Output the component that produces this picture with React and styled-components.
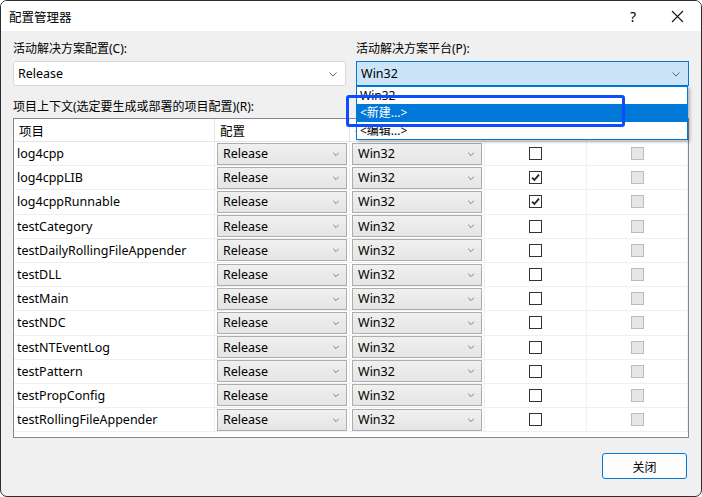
import React from "react";
import styled, { createGlobalStyle } from "styled-components";

const GlobalStyle = createGlobalStyle`
	html, body {
		margin: 0;
		padding: 0;
		background: #ffffff;
	}
	* {
		box-sizing: border-box;
	}
`;

const projects = [
	{ name: "log4cpp", build: false },
	{ name: "log4cppLIB", build: true },
	{ name: "log4cppRunnable", build: true },
	{ name: "testCategory", build: false },
	{ name: "testDailyRollingFileAppender", build: false },
	{ name: "testDLL", build: false },
	{ name: "testMain", build: false },
	{ name: "testNDC", build: false },
	{ name: "testNTEventLog", build: false },
	{ name: "testPattern", build: false },
	{ name: "testPropConfig", build: false },
	{ name: "testRollingFileAppender", build: false },
];

const platformOptions = ["Win32", "<新建...>", "<编辑...>"];

function Chevron({ size = 10, color = "#606060" }) {
	return (
		<svg width={size} height={size} viewBox="0 0 10 10">
			<path d="M1.5 3.5 L5 7 L8.5 3.5" fill="none" stroke={color} strokeWidth="1" />
		</svg>
	);
}

function CheckMark() {
	return (
		<svg width="11" height="11" viewBox="0 0 11 11">
			<path d="M2 5.6 L4.4 8 L9 2.6" fill="none" stroke="#222" strokeWidth="1.8" />
		</svg>
	);
}

function App() {
	return (
		<>
			<GlobalStyle />
			<Window>
				<TitleBar>
					<Title>配置管理器</Title>
					<TitleButtons>
						<HelpButton>?</HelpButton>
						<CloseIcon>
							<svg width="13" height="13" viewBox="0 0 13 13">
								<path d="M1 1 L12 12 M12 1 L1 12" stroke="#1a1a1a" strokeWidth="1.1" />
							</svg>
						</CloseIcon>
					</TitleButtons>
				</TitleBar>
				<Body>
					<TopRow>
						<Field>
							<Label>活动解决方案配置(C):</Label>
							<Combo>
								<span>Release</span>
								<Chevron />
							</Combo>
						</Field>
						<Field>
							<Label>活动解决方案平台(P):</Label>
							<ComboWrap>
								<Combo $active>
									<span>Win32</span>
									<Chevron />
								</Combo>
								<DropList>
									{platformOptions.map((opt, i) => (
										<DropItem key={opt} $selected={i === 1}>
											{opt}
										</DropItem>
									))}
								</DropList>
								<Highlight />
							</ComboWrap>
						</Field>
					</TopRow>
					<TableLabel>项目上下文(选定要生成或部署的项目配置)(R):</TableLabel>
					<Table>
						<HeaderRow>
							<HeadCell>项目</HeadCell>
							<HeadCell>配置</HeadCell>
							<HeadCell>平台</HeadCell>
							<HeadCell $center>生成</HeadCell>
							<HeadCell $center>部署</HeadCell>
						</HeaderRow>
						{projects.map((p) => (
							<Row key={p.name}>
								<NameCell>{p.name}</NameCell>
								<Cell>
									<CellCombo>
										<span>Release</span>
										<Chevron size={8} />
									</CellCombo>
								</Cell>
								<Cell>
									<CellCombo>
										<span>Win32</span>
										<Chevron size={8} />
									</CellCombo>
								</Cell>
								<Cell $center>
									<CheckBox>{p.build && <CheckMark />}</CheckBox>
								</Cell>
								<Cell $center>
									<CheckBox $disabled />
								</Cell>
							</Row>
						))}
					</Table>
					<Footer>
						<CloseButton>关闭</CloseButton>
					</Footer>
				</Body>
			</Window>
		</>
	);
}

const Window = styled.div`
	width: 702px;
	height: 497px;
	border: 1px solid #2e2e2e;
	border-radius: 7px;
	overflow: hidden;
	display: flex;
	flex-direction: column;
	background: #f0f0f0;
	font-family: "Noto Sans", "Noto Sans CJK SC", sans-serif;
	font-size: 12px;
	color: #000;
`;

const TitleBar = styled.div`
	height: 30px;
	flex-shrink: 0;
	background: #ffffff;
	display: flex;
	align-items: center;
	justify-content: space-between;
	padding-left: 8px;
`;

const Title = styled.div`
	font-size: 12.5px;
`;

const TitleButtons = styled.div`
	display: flex;
	align-items: center;
	height: 100%;
`;

const HelpButton = styled.div`
	width: 46px;
	text-align: center;
	font-size: 14px;
	margin-right: -2px;
`;

const CloseIcon = styled.div`
	width: 46px;
	display: flex;
	justify-content: center;
	margin-right: 1px;
`;

const Body = styled.div`
	flex: 1;
	padding: 9px 12px 0 12px;
	display: flex;
	flex-direction: column;
`;

const TopRow = styled.div`
	display: grid;
	grid-template-columns: 333px 333px;
	column-gap: 10px;
	position: relative;
	z-index: 2;
`;

const Field = styled.div`
	display: flex;
	flex-direction: column;
`;

const Label = styled.div`
	height: 17px;
	line-height: 17px;
	margin-bottom: 4px;
`;

const ComboWrap = styled.div`
	position: relative;
`;

const Combo = styled.div`
	height: 25px;
	display: flex;
	align-items: center;
	justify-content: space-between;
	padding: 0 7px 0 4px;
	border: 1px solid ${(p) => (p.$active ? "#0078d7" : "#d9d9d9")};
	border-radius: ${(p) => (p.$active ? "0" : "3px")};
	background: ${(p) => (p.$active ? "#cce4f7" : "#ffffff")};
	font-size: 12.5px;
`;

const DropList = styled.div`
	position: absolute;
	top: 25px;
	left: 0;
	width: 332px;
	background: #ffffff;
	border: 1px solid #0078d7;
	box-shadow: 2px 2px 3px rgba(0, 0, 0, 0.25);
	padding: 0;
`;

const DropItem = styled.div`
	height: 17.3px;
	line-height: 17px;
	padding-left: 3px;
	font-size: 12px;
	background: ${(p) => (p.$selected ? "#0078d7" : "transparent")};
	color: ${(p) => (p.$selected ? "#ffffff" : "#000000")};
`;

const Highlight = styled.div`
	position: absolute;
	left: -10px;
	top: 34px;
	width: 279px;
	height: 32px;
	border: 3px solid #0d4dff;
	border-radius: 3px;
	pointer-events: none;
`;

const TableLabel = styled.div`
	margin-top: 12px;
	height: 17px;
	line-height: 17px;
	font-size: 12px;
`;

const Table = styled.div`
	margin-top: 3px;
	height: 320px;
	border: 1px solid #828790;
	background: #ffffff;
	display: flex;
	flex-direction: column;
`;

const HeaderRow = styled.div`
	display: grid;
	grid-template-columns: 201px 135px 135px 102px 101px;
	height: 23px;
	flex-shrink: 0;
	border-bottom: 1px solid #e5e5e5;
`;

const HeadCell = styled.div`
	display: flex;
	align-items: center;
	justify-content: ${(p) => (p.$center ? "center" : "flex-start")};
	padding-left: ${(p) => (p.$center ? "0" : "5px")};
	border-right: 1px solid #e5e5e5;
	font-size: 12.5px;
`;

const Row = styled.div`
	display: grid;
	grid-template-columns: 201px 135px 135px 102px 101px;
	height: 24.2px;
	flex-shrink: 0;
	border-bottom: 1px solid #f0f0f0;
`;

const Cell = styled.div`
	display: flex;
	align-items: center;
	justify-content: ${(p) => (p.$center ? "center" : "flex-start")};
	padding: 0 2px;
	border-right: 1px solid #f0f0f0;
`;

const NameCell = styled(Cell)`
	padding-left: 3px;
	font-size: 12.5px;
`;

const CellCombo = styled.div`
	width: 100%;
	height: 22px;
	display: flex;
	align-items: center;
	justify-content: space-between;
	padding: 0 6px 0 5px;
	border: 1px solid #adadad;
	background: linear-gradient(#f0f0f0, #e5e5e5);
	font-size: 12.5px;
`;

const CheckBox = styled.div`
	width: 13px;
	height: 13px;
	display: flex;
	align-items: center;
	justify-content: center;
	border: 1px solid ${(p) => (p.$disabled ? "#bcbcbc" : "#333333")};
	background: ${(p) => (p.$disabled ? "#e6e6e6" : "#ffffff")};
`;

const Footer = styled.div`
	display: flex;
	justify-content: flex-end;
	padding-top: 15px;
	padding-right: 2px;
`;

const CloseButton = styled.button`
	width: 85px;
	height: 26px;
	border: 1px solid #0078d7;
	border-radius: 3px;
	background: #fdfdfd;
	font-family: "Noto Sans CJK SC", sans-serif;
	font-size: 12px;
	color: #000;
	padding: 0;
`;

export default App;
